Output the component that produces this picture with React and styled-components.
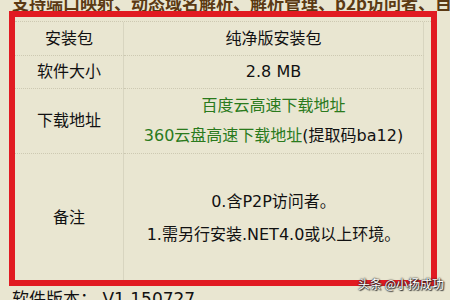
import React from 'react';
import styled, { createGlobalStyle } from 'styled-components';

const GlobalStyle = createGlobalStyle`
  html, body {
    margin: 0;
    padding: 0;
    background: #e9e6d1;
    overflow: hidden;
  }
  body {
    font-family: "DejaVu Sans", "Noto Sans CJK SC", sans-serif;
    color: #111;
  }
`;

const Page = styled.div`
  position: relative;
  width: 450px;
  height: 300px;
  overflow: hidden;
`;

const Heading = styled.div`
  height: 11px;
  padding-left: 12px;
  display: flex;
  align-items: flex-end;
  overflow: hidden;
  white-space: nowrap;
  font-family: "Noto Sans CJK SC", sans-serif;
  font-size: 17px;
  font-weight: 700;
  line-height: 1;
  color: #5b3a14;
`;

const Frame = styled.div`
  box-sizing: border-box;
  margin-left: 9px;
  width: 428px;
  height: 275px;
  border: 6px solid #e11b22;
  padding-top: 4px;
  overflow: hidden;
`;

const Table = styled.div`
  display: grid;
  grid-template-columns: 109px 300px;
  grid-template-rows: 34px 33px 65px 129px;
  border-top: 1px dotted #cdc9b2;
`;

const Cell = styled.div`
  display: flex;
  flex-direction: column;
  align-items: center;
  justify-content: center;
  border-bottom: 1px dotted #cdc9b2;
  border-right: 1px solid #d8d5c0;
  font-size: 16px;
  line-height: ${p => p.$lh || 20}px;
  color: ${p => (p.$link ? '#2a7a1c' : '#111')};
  white-space: nowrap;
`;

const Plain = styled.span`
  color: #111;
`;

const Footer = styled.div`
  margin-top: 3px;
  padding-left: 12px;
  font-size: 17px;
  line-height: 20px;
  font-family: "DejaVu Sans", "Noto Sans CJK SC", sans-serif;
  color: #111;
  white-space: nowrap;
`;

const Watermark = styled.div`
  position: absolute;
  left: 358px;
  top: 276px;
  font-family: "Noto Sans CJK SC", sans-serif;
  font-size: 12px;
  line-height: 16px;
  color: #fff;
  white-space: nowrap;
  text-shadow: 0 0 1px #222, 0 0 2px #222, 1px 1px 1px #333;
`;

export default function App() {
  return (
    <Page>
      <GlobalStyle />
      <Heading>支持端口映射、动态域名解析、解析管理、p2p访问者、目</Heading>
      <Frame>
        <Table>
          <Cell>安装包</Cell>
          <Cell>纯净版安装包</Cell>
          <Cell>软件大小</Cell>
          <Cell>2.8 MB</Cell>
          <Cell>下载地址</Cell>
          <Cell $link $lh={30}>
            <span>百度云高速下载地址</span>
            <span>360云盘高速下载地址<Plain>(提取码ba12)</Plain></span>
          </Cell>
          <Cell>备注</Cell>
          <Cell $lh={33}>
            <span>0.含P2P访问者。</span>
            <span>1.需另行安装.NET4.0或以上环境。</span>
          </Cell>
        </Table>
      </Frame>
      <Footer>软件版本： V1.150727</Footer>
      <Watermark>头条 @小扬成功</Watermark>
    </Page>
  );
}
